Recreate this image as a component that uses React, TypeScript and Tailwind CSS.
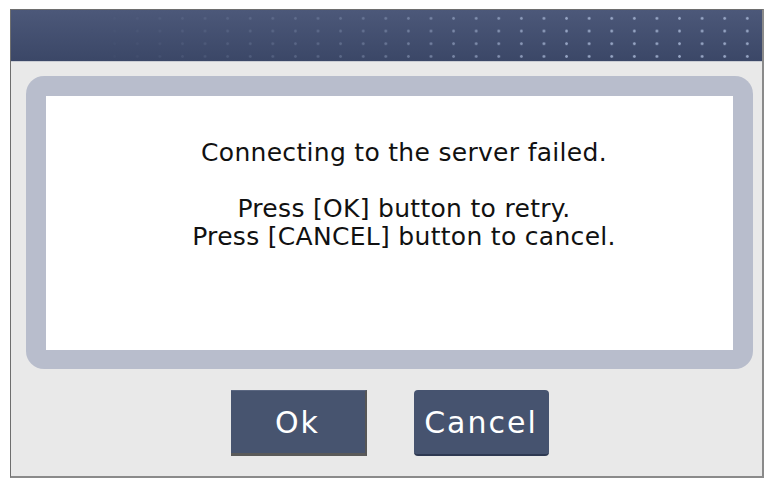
import React from "react";

const App: React.FC = () => {
  return (
    <div className="min-h-screen bg-white pl-[10px] pt-[9px]">
      {/* dialog window */}
      <div className="w-[754px] h-[469px] flex flex-col border border-[#6e6e6e] border-r-2 border-b-2 border-r-[#8a8a8a] border-b-[#8a8a8a] bg-[#e9e9e9]">
        {/* title bar */}
        <div className="relative h-[52px] shrink-0 bg-gradient-to-b from-[#4c5879] to-[#3b4767] border-b border-[#c9ccd3]">
          <div className="absolute inset-0 bg-[radial-gradient(circle,rgba(160,175,205,0.9)_1px,transparent_1.7px)] bg-[length:22.6px_12.7px] bg-[position:2px_2px] [mask-image:linear-gradient(to_right,transparent_10%,rgba(0,0,0,0.35)_45%,black_75%)]"></div>
        </div>

        {/* body */}
        <div className="flex-1 pl-[15px] pr-[9px] pt-[14px]">
          <div className="h-[293px] rounded-[18px] bg-[#b8bdcc] pt-[20px] pl-[20px] pr-[20px] pb-[19px]">
            <div
              className="h-full bg-white flex flex-col items-center pt-[43px] pl-[29px] text-[25px] leading-[28px] tracking-[0.3px] text-[#111]"
              style={{ fontFamily: '"DejaVu Sans", sans-serif' }}
            >
              <p>Connecting to the server failed.</p>
              <p className="mt-[28px]">Press [OK] button to retry.</p>
              <p>Press [CANCEL] button to cancel.</p>
            </div>
          </div>

          {/* buttons */}
          <div
            className="mt-[21px] flex justify-center gap-[47px] text-white text-[30px] tracking-[2px]"
            style={{ fontFamily: '"DejaVu Sans", sans-serif' }}
          >
            <button className="w-[136px] h-[66px] bg-[#47546f] border-t border-t-[#5b6781] border-r-2 border-b-[3px] border-r-[#565656] border-b-[#5a5a5a] flex items-center justify-center">
              Ok
            </button>
            <button className="w-[135px] h-[66px] rounded-[4px] bg-[#46536f] border-b-2 border-[#2e3952] flex items-center justify-center">
              Cancel
            </button>
          </div>
        </div>
      </div>
    </div>
  );
};

export default App;
